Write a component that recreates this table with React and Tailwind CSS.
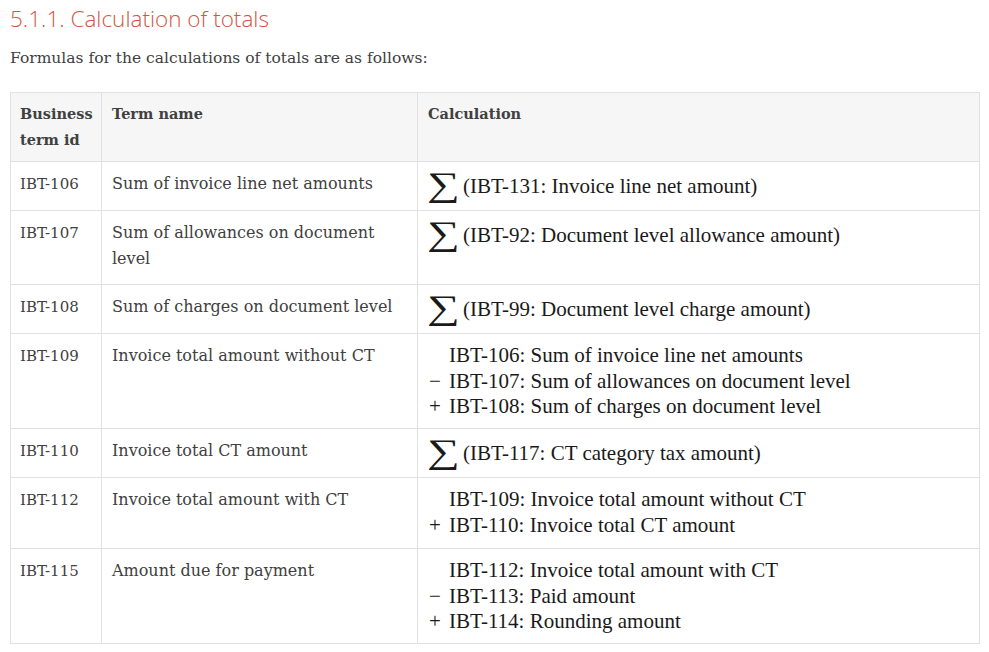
const rows = [
  { id: 'IBT-106', name: 'Sum of invoice line net amounts', h: 'h-[49px]', sum: '(IBT-131: Invoice line net amount)' },
  { id: 'IBT-107', name: 'Sum of allowances on document level', h: 'h-[74px]', sum: '(IBT-92: Document level allowance amount)' },
  { id: 'IBT-108', name: 'Sum of charges on document level', h: 'h-[49px]', sum: '(IBT-99: Document level charge amount)' },
  {
    id: 'IBT-109',
    name: 'Invoice total amount without CT',
    h: 'h-[95px]',
    lines: [
      ['', 'IBT-106: Sum of invoice line net amounts'],
      ['−', 'IBT-107: Sum of allowances on document level'],
      ['+', 'IBT-108: Sum of charges on document level'],
    ],
  },
  { id: 'IBT-110', name: 'Invoice total CT amount', h: 'h-[49px]', sum: '(IBT-117: CT category tax amount)' },
  {
    id: 'IBT-112',
    name: 'Invoice total amount with CT',
    h: 'h-[71px]',
    lines: [
      ['', 'IBT-109: Invoice total amount without CT'],
      ['+', 'IBT-110: Invoice total CT amount'],
    ],
  },
  {
    id: 'IBT-115',
    name: 'Amount due for payment',
    h: 'h-[95px]',
    lines: [
      ['', 'IBT-112: Invoice total amount with CT'],
      ['−', 'IBT-113: Paid amount'],
      ['+', 'IBT-114: Rounding amount'],
    ],
  },
];

function Formula({ row }) {
  if (row.sum) {
    return (
      <div className="flex items-center h-[32px] font-['Liberation_Serif',serif] text-[21px] text-[#1a1a1a]">
        <span className="inline-block w-[28px] text-center text-[34px] leading-none ml-[1px] mr-[6px] -mt-[3px] scale-x-[1.35]">∑</span>
        <span>{row.sum}</span>
      </div>
    );
  }
  return (
    <div className="pt-[1px] font-['Liberation_Serif',serif] text-[21px] leading-[25.5px] text-[#1a1a1a]">
      {row.lines.map(([op, text]) => (
        <div key={text} className="flex">
          <span className="w-[21px] pl-[1px]">{op}</span>
          <span>{text}</span>
        </div>
      ))}
    </div>
  );
}

export default function App() {
  return (
    <div className="bg-white min-h-[652px] px-[10px] pt-[2px] text-[#404040] font-['DejaVu_Serif',serif]">
      <h3 className="font-['Open_Sans',sans-serif] font-light text-[22.5px] leading-[34px] text-[#d0573f]">
        5.1.1. Calculation of totals
      </h3>
      <p className="text-[15.5px] leading-[24px] mt-[10px] mb-[22px]">
        Formulas for the calculations of totals are as follows:
      </p>
      <table className="w-[970px] table-fixed border-collapse border border-[#e1e1e1] text-[16px] leading-[26px]">
        <colgroup>
          <col className="w-[91px]" />
          <col className="w-[316px]" />
          <col />
        </colgroup>
        <thead>
          <tr className="h-[69px] bg-[#f6f6f6] text-[14.5px]">
            <th className="border border-[#e1e1e1] align-top text-left font-bold px-[9px] pt-[8px]">Business term id</th>
            <th className="border border-[#e1e1e1] align-top text-left font-bold px-[10px] pt-[8px]">Term name</th>
            <th className="border border-[#e1e1e1] align-top text-left font-bold px-[10px] pt-[8px]">Calculation</th>
          </tr>
        </thead>
        <tbody>
          {rows.map(row => (
            <tr key={row.id} className={row.h}>
              <td className="border border-[#e1e1e1] align-top px-[9px] pt-[9px] text-[15px]">{row.id}</td>
              <td className="border border-[#e1e1e1] align-top px-[10px] pt-[9px]">{row.name}</td>
              <td className="border border-[#e1e1e1] align-top px-[10px] pt-[8px]">
                <Formula row={row} />
              </td>
            </tr>
          ))}
        </tbody>
      </table>
    </div>
  );
}
